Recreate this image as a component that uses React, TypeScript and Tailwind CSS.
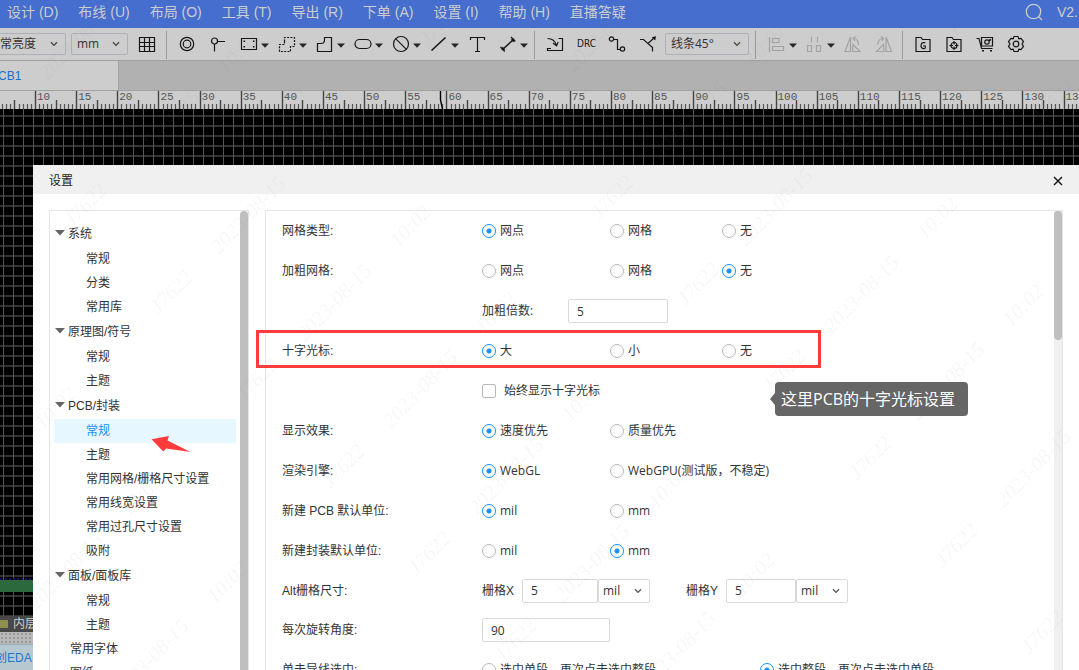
import React, { useEffect, useState } from "react";

const menus = ["设计 (D)", "布线 (U)", "布局 (O)", "工具 (T)", "导出 (R)", "下单 (A)", "设置 (I)", "帮助 (H)", "直播答疑"];

function useWindowSize() {
  const [size, setSize] = useState({ width: window.innerWidth, height: window.innerHeight });
  useEffect(() => {
    const update = () => setSize({ width: window.innerWidth, height: window.innerHeight });
    window.addEventListener("resize", update);
    return () => window.removeEventListener("resize", update);
  }, []);
  return size;
}

function Chevron({ className = "" }: { className?: string }) {
  return (
    <svg viewBox="0 0 8 6" className={`pointer-events-none absolute h-[6px] w-2 ${className}`} fill="none" stroke="currentColor" strokeWidth="1.3" aria-hidden="true">
      <path d="M1 1.2 L4 4.4 L7 1.2" />
    </svg>
  );
}

function Icon({ children }: { children: React.ReactNode }) {
  return (
    <svg viewBox="0 0 18 18" className="h-[18px] w-[18px] shrink-0 overflow-visible" fill="none" stroke="currentColor" strokeWidth="1.2" aria-hidden="true">
      {children}
    </svg>
  );
}

function Tool({ label, caret, muted, children }: { label: string; caret?: boolean; muted?: boolean; children: React.ReactNode }) {
  return (
    <button
      type="button"
      aria-label={label}
      className={`flex h-8 shrink-0 items-center pl-[6px] ${caret ? "w-[38px]" : "w-[31px]"} ${muted ? "text-[#a3a3a3]" : "text-[#161616]"}`}
    >
      {children}
      {caret && (
        <svg viewBox="0 0 8 5" className="mt-[3px] ml-[3px] h-[5px] w-2 shrink-0 text-[#262626]" fill="currentColor" aria-hidden="true">
          <path d="M0 0.4 H8 L4 4.8Z" />
        </svg>
      )}
    </button>
  );
}

function Separator() {
  return <div className="mt-[2px] h-7 w-px shrink-0 bg-[#999]" />;
}

function ToolSelect({ label, value, className }: { label: string; value: string; className: string }) {
  return (
    <div className={`relative shrink-0 ${className}`}>
      <select aria-label={label} className="h-[22px] w-full appearance-none rounded-[2px] border border-[#acb0b8] bg-transparent pl-[5px] font-['Open_Sans','Noto_Sans_CJK_SC',sans-serif] text-xs text-[#333] outline-none">
        <option>{value}</option>
      </select>
      <Chevron className="top-2 right-2 text-[#444]" />
    </div>
  );
}

function Toolbar() {
  return (
    <div className="flex h-8 shrink-0 items-center overflow-hidden bg-[#cdcdcd]">
      <ToolSelect label="亮度" value="正常亮度" className="-ml-[18px] w-[84px]" />
      <ToolSelect label="单位" value="mm" className="mr-[4px] ml-[5px] w-[57px]" />
      <Tool label="网格">
        <Icon><path d="M1.5 2.5H16.5V16.5H1.5Z M6.5 2.5V16.5 M11.5 2.5V16.5 M1.5 7.5H16.5 M1.5 11.5H16.5" /></Icon>
      </Tool>
      <div className="w-[3px] shrink-0" />
      <Separator />
      <div className="w-[5px] shrink-0" />
      <Tool label="焊盘">
        <Icon><circle cx="9" cy="9" r="6.7" /><circle cx="9" cy="9" r="3.8" /></Icon>
      </Tool>
      <Tool label="过孔">
        <Icon><circle cx="5.5" cy="6" r="3" /><path d="M8.5 6.5H16 M5.5 9V16.5" /></Icon>
      </Tool>
      <Tool label="矩形" caret>
        <Icon>
          <path d="M1.5 3.5H16.5V14.5H1.5Z" />
          <path d="M3.5 5.5h1.6v1.6h-1.6zM12.9 5.5h1.6v1.6h-1.6zM3.5 10.9h1.6v1.6h-1.6zM12.9 10.9h1.6v1.6h-1.6z" fill="currentColor" stroke="none" />
        </Icon>
      </Tool>
      <Tool label="选区" caret>
        <Icon><path d="M6.5 6.5V2.5H16.5V11.5H12.5V16.5H1.5V9.5H6.5Z" strokeDasharray="2 1.3" /></Icon>
      </Tool>
      <Tool label="多边形" caret>
        <Icon><path d="M1.5 16.5V8.5H5C7 8.5 8.5 7 8.5 5V2.5H15.5V16.5Z" /></Icon>
      </Tool>
      <Tool label="挖槽" caret>
        <Icon><rect x="1" y="4.5" width="16" height="9" rx="4.5" /></Icon>
      </Tool>
      <Tool label="禁止区域" caret>
        <Icon><circle cx="9" cy="9" r="7.5" /><path d="M3.6 3.6L14.4 14.4" /></Icon>
      </Tool>
      <Tool label="线条" caret>
        <Icon><path d="M1.5 15.5L15.5 2.5" strokeWidth="1.6" /></Icon>
      </Tool>
      <Tool label="文本">
        <Icon><path d="M2.5 5V2.5H16.5V5 M9.5 2.5V16.5 M7 16.5H12" /></Icon>
      </Tool>
      <Tool label="尺寸" caret>
        <Icon>
          <path d="M3.5 14.5L14.5 4.5" strokeWidth="1.4" />
          <path d="M1.5 12L5.8 16.5M12 2L16.3 6.5" />
          <path d="M2.5 15.4L3.5 11.6L6.4 14.6ZM15.5 3.6L11.6 4.4L14.5 7.4Z" fill="currentColor" stroke="none" />
        </Icon>
      </Tool>
      <div className="w-[3px] shrink-0" />
      <Separator />
      <div className="w-[5px] shrink-0" />
      <Tool label="导入变更">
        <Icon><path d="M5 13.5H1.5V15.5H16.5V3.5H12.5 M1.5 3.5C6 3.5 9 5 10.5 10.5 M7 8L10.5 10.8L12.2 7" /></Icon>
      </Tool>
      <Tool label="检查">
        <span className="font-['DejaVu_Sans_Condensed',sans-serif] text-[10px]">DRC</span>
      </Tool>
      <Tool label="布线">
        <Icon><circle cx="3.5" cy="4" r="2.2" /><circle cx="14.5" cy="14" r="2.2" /><path d="M5.7 4.5H9.5V14.5H12.3" /></Icon>
      </Tool>
      <Tool label="差分布线">
        <Icon>
          <path d="M1 4.5H4.5L13.5 12.5V16.5 M9 8.5L15 3" />
          <path d="M17 1.2L16.2 5.4L12.6 2.2Z" fill="currentColor" stroke="none" />
        </Icon>
      </Tool>
      <ToolSelect label="走线拐角" value="线条45°" className="mr-[6px] ml-px w-[84px]" />
      <Separator />
      <div className="w-[6px] shrink-0" />
      <Tool label="对齐" caret muted>
        <Icon><path d="M1.5 2V17 M4.5 3.5H11V7.5H4.5Z M4.5 11.5H15.5V15.5H4.5Z" /></Icon>
      </Tool>
      <Tool label="分布" caret muted>
        <Icon><path d="M5.5 2V7.5 M11.5 2V7.5 M1.5 10.5H5.5V16.5H1.5Z M10.5 10.5H14.5V16.5H10.5Z" /></Icon>
      </Tool>
      <Tool label="左旋" muted>
        <Icon><path d="M1 16.5L6.5 2V16.5Z M8.5 16.5H16L9 9.5Z M9 3.5C12.5 3.5 14.5 6 14.5 10 M11.5 1.5L9 3.5L11 6" /></Icon>
      </Tool>
      <Tool label="右旋" muted>
        <Icon><path d="M16.5 16.5L11 2V16.5Z M9 16.5H1.5L8.5 9.5Z M8.5 3.5C5 3.5 3 6 3 9.5 M6 1.5L8.5 3.5L6.5 6" /></Icon>
      </Tool>
      <div className="w-[2px] shrink-0" />
      <Separator />
      <div className="w-[5px] shrink-0" />
      <Tool label="导出制造文件">
        <Icon>
          <path d="M2 16.5V2.5H7L8.5 4.5H16V16.5Z" />
          <path d="M11.3 8.2C10.5 7.2 7 7 7 10.7C7 14.3 11.3 14 11.3 12.8V11H9" />
        </Icon>
      </Tool>
      <Tool label="导出坐标文件">
        <Icon>
          <path d="M2 16.5V2.5H7L8.5 4.5H16V16.5Z" />
          <circle cx="9" cy="10.5" r="3" /><path d="M9 6V9.5 M9 11.5V15 M4.5 10.5H8 M10 10.5H13.5" />
        </Icon>
      </Tool>
      <Tool label="下单">
        <Icon>
          <path d="M0.5 3.5H3L5.5 13.5H16.5 M5.5 2.5H16.5V11H5.5Z" />
          <circle cx="11" cy="7" r="2.2" /><path d="M13 5.5L15 4.5 M6 15.8H8 M14 15.8H16" strokeWidth="1.6" />
        </Icon>
      </Tool>
      <Tool label="设置">
        <Icon>
          <path strokeLinejoin="round" d="M7 1.5H11L11.8 3.8L14 3.4L16.5 6.7L15 9L16.5 11.3L14 14.6L11.8 14.2L11 16.5H7L6.2 14.2L4 14.6L1.5 11.3L3 9L1.5 6.7L4 3.4L6.2 3.8Z" />
          <circle cx="9" cy="9" r="2.8" />
        </Icon>
      </Tool>
    </div>
  );
}

const STEP = 41.14;
const ORIGIN = 35;

function Ruler() {
  const { width } = useWindowSize();
  const count = Math.ceil((width - ORIGIN) / STEP);
  const ticks = [];
  for (let i = -8; i < count * 10; i++) {
    const x = Math.round(ORIGIN + (i * STEP) / 10) + 0.5;
    const major = i % 10 === 0;
    const mid = i % 5 === 0;
    ticks.push(
      <path key={i} d={`M${x} ${major ? 0 : mid ? 9 : 13}V18`} stroke={major || mid ? "#444" : "#555"} strokeWidth={major || mid ? 1.4 : 1.2} />
    );
  }
  const labels = Array.from({ length: count }, (_, i) => (
    <text key={i} x={ORIGIN + 2 + i * STEP} y="9" fontSize="11" fill="#555" fontFamily="Liberation Mono, monospace">
      {10 + i * 5}
    </text>
  ));
  return (
    <svg className="h-[18px] w-full shrink-0 bg-[#cdcdcd]" aria-hidden="true">
      {ticks}
      {labels}
      <path d="M440.5 0V9L442.5 18" stroke="#000" strokeWidth="1.4" fill="none" />
    </svg>
  );
}

type Leaf = { name: string; selected?: boolean };
const tree: { name: string; items: Leaf[] }[] = [
  { name: "系统", items: [{ name: "常规" }, { name: "分类" }, { name: "常用库" }] },
  { name: "原理图/符号", items: [{ name: "常规" }, { name: "主题" }] },
  {
    name: "PCB/封装",
    items: [
      { name: "常规", selected: true },
      { name: "主题" },
      { name: "常用网格/栅格尺寸设置" },
      { name: "常用线宽设置" },
      { name: "常用过孔尺寸设置" },
      { name: "吸附" },
    ],
  },
  { name: "面板/面板库", items: [{ name: "常规" }, { name: "主题" }] },
];

function Sidebar() {
  return (
    <nav aria-label="设置分类" className="flex w-[200px] shrink-0 border border-b-0 border-[#e6e6e6]">
      <ul className="min-w-0 flex-1 pt-[10px] pr-1 pl-1">
        {tree.map((group) => (
          <li key={group.name}>
            <button type="button" className="flex h-[26px] w-full items-center gap-[3px] pl-px">
              <svg viewBox="0 0 10 6" className="-mt-[3px] h-[6px] w-[10px]" fill="#666" aria-hidden="true">
                <path d="M0 0H10L5 5.5Z" />
              </svg>
              {group.name}
            </button>
            <ul>
              {group.items.map((item) => (
                <li key={item.name} className="relative">
                  <button
                    type="button"
                    className={`flex h-6 w-full items-center pl-8 ${item.selected ? "bg-[#e6f7ff] text-[#1890ff]" : ""}`}
                  >
                    {item.name}
                  </button>
                  {item.selected && (
                    <svg viewBox="0 0 40 18" className="absolute top-4 left-[97px] h-[18px] w-10" fill="#ff3b3b" aria-hidden="true">
                      <path d="M0.5 4.3L18 1L16.5 5.5L39.5 17L15 13.5L12.3 16.5Z" />
                    </svg>
                  )}
                </li>
              ))}
            </ul>
          </li>
        ))}
        {["常用字体", "图纸"].map((name) => (
          <li key={name}>
            <button type="button" className="flex h-6 w-full items-center pl-4">{name}</button>
          </li>
        ))}
      </ul>
      <div className="w-2 shrink-0 rounded-t bg-[#bfbfbf]" />
    </nav>
  );
}

function Radio({ name, label, checked, width = "" }: { name: string; label: string; checked?: boolean; width?: string }) {
  return (
    <label className={`flex shrink-0 items-center gap-1 whitespace-nowrap ${width}`}>
      <input
        type="radio"
        name={name}
        defaultChecked={checked}
        className="h-[14px] w-[14px] shrink-0 appearance-none rounded-full border border-[#b8b8b8] checked:border-[#1890ff] checked:bg-[radial-gradient(circle,#1890ff_2px,transparent_3px)]"
      />
      {label}
    </label>
  );
}

function Row({ label, className = "h-10", children }: { label?: string; className?: string; children: React.ReactNode }) {
  return (
    <div className={`relative flex items-center ${className}`} role="group" aria-label={label}>
      <div className="w-[200px] shrink-0 font-['Liberation_Sans','Noto_Sans_CJK_SC',sans-serif]">{label}</div>
      {children}
    </div>
  );
}

function NumberBox({ id, value, className }: { id: string; value: string; className: string }) {
  return (
    <input
      id={id}
      type="text"
      defaultValue={value}
      className={`h-6 rounded-[2px] border border-[#d9d9d9] bg-white px-2 font-['Open_Sans',sans-serif] text-xs text-[#333] outline-none ${className}`}
    />
  );
}

function UnitSelect({ label }: { label: string }) {
  return (
    <div className="relative w-[52px] shrink-0">
      <select aria-label={label} className="h-6 w-full appearance-none rounded-[2px] border border-[#d9d9d9] bg-white pl-1 font-['Open_Sans',sans-serif] text-xs text-[#333] outline-none">
        <option>mil</option>
        <option>mm</option>
      </select>
      <Chevron className="top-[9px] right-2 text-[#555]" />
    </div>
  );
}

function Settings() {
  return (
    <div className="flex min-w-0 flex-1 border border-b-0 border-[#e6e6e6]">
      <form className="min-w-0 flex-1 pl-4 font-['Open_Sans','Noto_Sans_CJK_SC',sans-serif]">
        <Row label="网格类型:">
          <Radio name="grid" label="网点" checked width="w-32" />
          <Radio name="grid" label="网格" width="w-28" />
          <Radio name="grid" label="无" />
        </Row>
        <Row label="加粗网格:">
          <Radio name="bold" label="网点" width="w-32" />
          <Radio name="bold" label="网格" width="w-28" />
          <Radio name="bold" label="无" checked />
        </Row>
        <Row>
          <label htmlFor="bold-ratio" className="w-[86px]">加粗倍数:</label>
          <NumberBox id="bold-ratio" value="5" className="w-[100px]" />
        </Row>
        <Row label="十字光标:">
          <Radio name="cursor" label="大" checked width="w-32" />
          <Radio name="cursor" label="小" width="w-28" />
          <Radio name="cursor" label="无" />
          <div className="pointer-events-none absolute -top-px -left-[26px] h-[38px] w-[565px] border-[3px] border-[#ff3b3b]" />
        </Row>
        <Row>
          <label className="flex items-center gap-2">
            <input
              type="checkbox"
              className="h-[14px] w-[14px] appearance-none rounded-[2px] border border-[#b8b8b8] checked:bg-[#1890ff]"
            />
            始终显示十字光标
          </label>
          <div role="note" className="absolute top-[11px] left-[493px] flex h-[34px] w-[193px] items-center rounded bg-[#666] pl-[6px] text-base whitespace-nowrap text-white">
            <svg viewBox="0 0 5 12" className="absolute top-[11px] -left-[5px] h-3 w-[5px]" fill="#666" aria-hidden="true">
              <path d="M5 0V12L0 6Z" />
            </svg>
            这里PCB的十字光标设置
          </div>
        </Row>
        <Row label="显示效果:">
          <Radio name="effect" label="速度优先" checked width="w-32" />
          <Radio name="effect" label="质量优先" />
        </Row>
        <Row label="渲染引擎:">
          <Radio name="engine" label="WebGL" checked width="w-32" />
          <Radio name="engine" label="WebGPU(测试版，不稳定)" />
        </Row>
        <Row label="新建 PCB 默认单位:">
          <Radio name="pcb-unit" label="mil" checked width="w-32" />
          <Radio name="pcb-unit" label="mm" />
        </Row>
        <Row label="新建封装默认单位:">
          <Radio name="fp-unit" label="mil" width="w-32" />
          <Radio name="fp-unit" label="mm" checked />
        </Row>
        <Row label="Alt栅格尺寸:" className="h-[39px] font-['Liberation_Sans','Noto_Sans_CJK_SC',sans-serif]">
          <label htmlFor="grid-x" className="w-10">栅格X</label>
          <NumberBox id="grid-x" value="5" className="w-[76px]" />
          <UnitSelect label="栅格X单位" />
          <label htmlFor="grid-y" className="ml-9 w-10">栅格Y</label>
          <NumberBox id="grid-y" value="5" className="w-[70px]" />
          <UnitSelect label="栅格Y单位" />
        </Row>
        <div className="flex h-10 items-center">
          <label htmlFor="angle" className="w-[200px] font-['Liberation_Sans','Noto_Sans_CJK_SC',sans-serif]">每次旋转角度:</label>
          <NumberBox id="angle" value="90" className="w-32" />
        </div>
        <Row label="单击导线选中:">
          <Radio name="wire" label="选中单段，再次点击选中整段" width="w-[278px]" />
          <Radio name="wire" label="选中整段，再次点击选中单段" checked />
        </Row>
      </form>
      <div className="w-2 shrink-0 bg-[#f0f0f0]">
        <div className="h-[129px] rounded bg-[#bfbfbf]" />
      </div>
    </div>
  );
}

const stamps = [
  { text: "J7622", offset: 0 },
  { text: "2023-08-15", offset: 77 },
  { text: "10:02", offset: 153 },
];

function Watermark() {
  const { width, height } = useWindowSize();
  const marks = [];
  for (let a = -12; a < 24; a++) {
    for (let b = -6; b < 12; b++) {
      for (const { text, offset } of stamps) {
        const x = 171 + a * 86 + b * 269 + offset;
        const y = 292 + a * 87 - b * 269 - offset;
        if (x < 10 || x > width - 10 || y < 10 || y > height - 10) continue;
        marks.push(
          <text key={`${a}:${b}:${offset}`} transform={`translate(${x} ${y}) rotate(-46)`} y="7">
            {text}
          </text>
        );
      }
    }
  }
  return (
    <svg className="pointer-events-none absolute inset-0 h-full w-full" aria-hidden="true" fill="#808080" fillOpacity="0.07" fontFamily="Liberation Serif, serif" fontStyle="italic" fontSize="21" textAnchor="middle">
      {marks}
    </svg>
  );
}

export default function App() {
  return (
    <div className="relative flex h-screen flex-col overflow-hidden bg-black font-['Liberation_Sans','Noto_Sans_CJK_SC',sans-serif] text-xs text-[#333]">
      <header className="flex h-7 shrink-0 items-center bg-[#456ecf] pb-1 pl-[7px] text-sm text-[#cdcdcd]">
        <nav className="flex gap-5 whitespace-nowrap">
          {menus.map((m) => (
            <button key={m} type="button">{m}</button>
          ))}
        </nav>
        <div className="ml-auto flex shrink-0 items-center gap-[14px]">
          <button type="button" aria-label="搜索">
            <svg viewBox="0 0 18 18" className="h-[18px] w-[18px]" fill="none" stroke="currentColor" strokeWidth="1.3" aria-hidden="true">
              <circle cx="8.5" cy="8.5" r="7.2" />
              <path d="M13.5 13.5L17 17" />
            </svg>
          </button>
          <span className="w-[22px] whitespace-nowrap">V2.</span>
        </div>
      </header>
      <Toolbar />
      <div className="flex h-[31px] shrink-0 border-t border-b border-[#a0a0a0] bg-[#b1b1b1]">
        <button type="button" className="-ml-[19px] flex w-[138px] items-center border-r border-[#a3a3a3] bg-[#cdcdcd] pl-[9px] text-[#1a70c8]">
          PCB1
        </button>
      </div>
      <Ruler />
      <main className="relative flex-1 bg-black bg-[linear-gradient(to_right,#555_1px,transparent_1px),linear-gradient(to_bottom,#333_2px,transparent_2px)] bg-size-[10px_10px] bg-position-[3px_6px]">
        <div className="absolute bottom-6 left-0 h-[14px] w-full border-t-2 border-dotted border-[#11116b] bg-[#2c693d] bg-clip-padding" />
      </main>
      <div className="flex h-4 shrink-0 items-center gap-[5px] bg-[#484848] text-[#cdcdcd]">
        <span className="h-2 w-2 bg-[#8f8f4c]" />
        <span className="text-xs whitespace-nowrap">内层1</span>
      </div>
      <div className="h-3 shrink-0 bg-[#b9b9b9] bg-[radial-gradient(#999_1px,transparent_1px)] bg-size-[4px_4px]" />
      <footer className="flex h-[26px] shrink-0 items-center border-t border-[#98aebb] bg-[#b7c8d1]">
        <a href="#eda" className="-ml-[17px] whitespace-nowrap text-[#2277cc]">立创EDA</a>
      </footer>

      <section role="dialog" aria-label="设置" className="absolute top-[165px] right-0 bottom-0 left-[33px] flex flex-col overflow-hidden bg-white">
        <div className="flex h-[29px] shrink-0 items-center justify-between bg-[#f0f0f0] pt-[2px] pr-4 pl-4">
          <h1 className="text-xs text-[#222]">设置</h1>
          <button type="button" aria-label="关闭">
            <svg viewBox="0 0 10 10" className="h-[10px] w-[10px]" fill="none" stroke="#1a1a1a" strokeWidth="1.5" aria-hidden="true">
              <path d="M1 1L9 9M9 1L1 9" />
            </svg>
          </button>
        </div>
        <div className="flex min-h-0 flex-1 gap-4 pt-4 pr-4 pl-4">
          <Sidebar />
          <Settings />
        </div>
      </section>
      <Watermark />
    </div>
  );
}
